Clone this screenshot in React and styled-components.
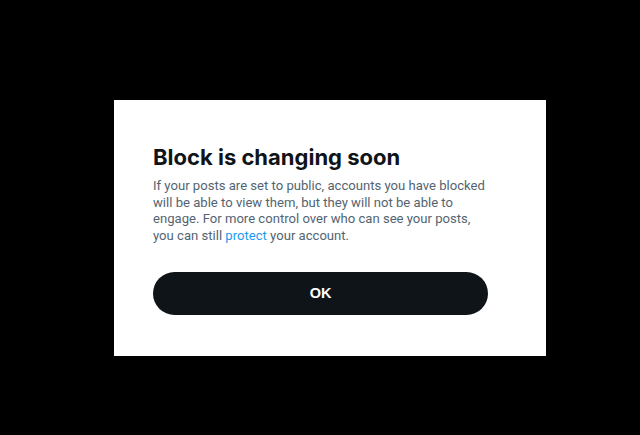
import React from 'react';
import styled, { createGlobalStyle } from 'styled-components';

const GlobalStyle = createGlobalStyle`
    html, body {
        margin: 0;
        padding: 0;
        background: #000;
    }
    body {
        font-family: Roboto, "Noto Sans", sans-serif;
    }
`

const Backdrop = styled.div`
    width: 640px;
    height: 435px;
    background: #000;
    display: flex;
    align-items: flex-start;
    padding: 100px 0 0 114px;
    box-sizing: border-box;
`

const Dialog = styled.div`
    width: 432px;
    height: 256px;
    background: #fff;
    box-sizing: border-box;
    padding: 44px 58px 0 39px;
    display: flex;
    flex-direction: column;
`

const Title = styled.h1`
    margin: 0;
    font-family: Inter, "Noto Sans", sans-serif;
    font-size: 22px;
    line-height: 26px;
    font-weight: 700;
    color: #0f1419;
`

const Body = styled.p`
    margin: 8px 0 0;
    font-family: Roboto, "Noto Sans", sans-serif;
    font-size: 13.1px;
    line-height: 16.7px;
    color: #536471;
    white-space: nowrap;
`

const Link = styled.a`
    color: #1d9bf0;
    text-decoration: none;
`

const OkButton = styled.button`
    margin-top: 27px;
    width: 335px;
    height: 43px;
    border: none;
    border-radius: 999px;
    background: #0f1419;
    color: #fff;
    font-family: "Liberation Sans", Arial, sans-serif;
    font-weight: 700;
    font-size: 14.5px;
    cursor: pointer;
`

export default function App() {
    return (
        <>
            <GlobalStyle />
            <Backdrop>
                <Dialog>
                    <Title>Block is changing soon</Title>
                    <Body>
                        If your posts are set to public, accounts you have blocked<br />
                        will be able to view them, but they will not be able to<br />
                        engage. For more control over who can see your posts,<br />
                        you can still <Link>protect</Link> your account.
                    </Body>
                    <OkButton>OK</OkButton>
                </Dialog>
            </Backdrop>
        </>
    );
}
